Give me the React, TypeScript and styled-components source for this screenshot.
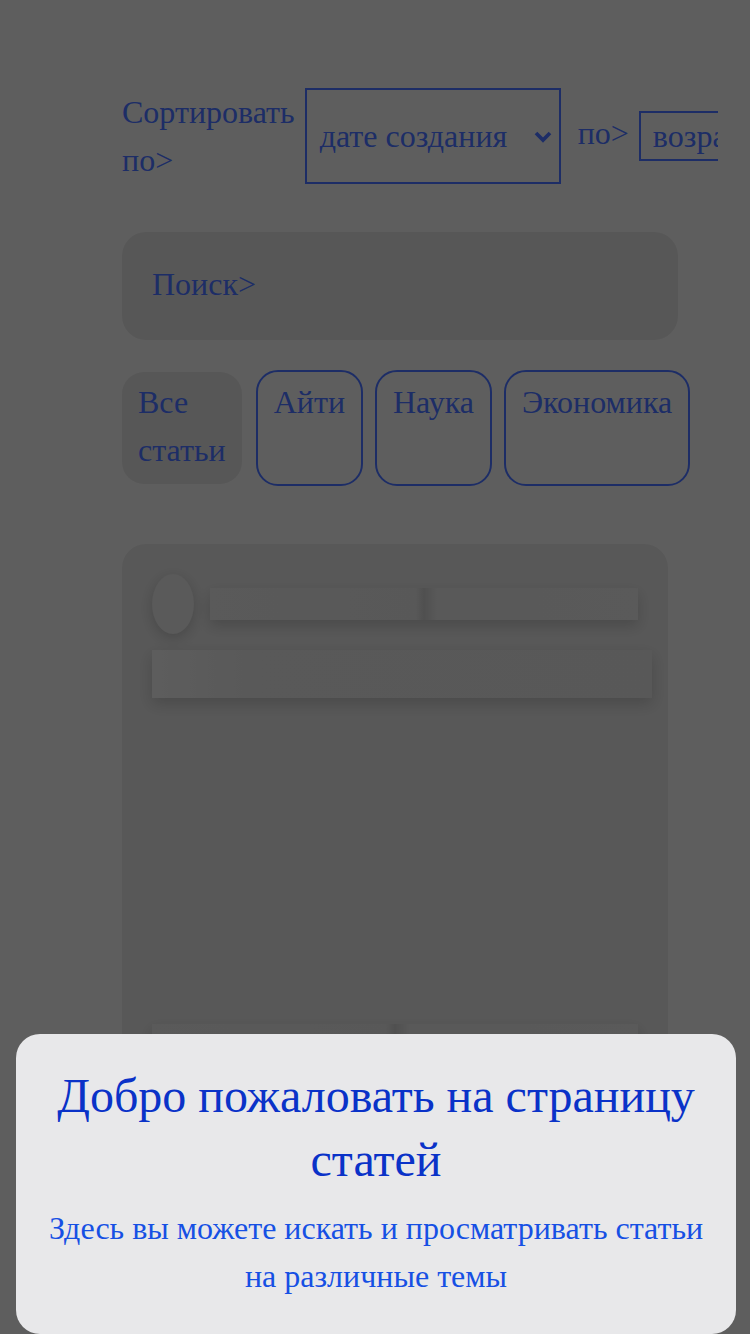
import React from "react";
import styled, { createGlobalStyle } from "styled-components";

const GlobalStyle = createGlobalStyle`
  html, body {
    margin: 0;
    padding: 0;
    background: #ececec;
    font-family: "Liberation Serif", "Times New Roman", serif;
  }
`;

const tabs = ["Все статьи", "Айти", "Наука", "Экономика"];

function Chevron() {
  return (
    <svg width="20" height="14" viewBox="0 0 20 14">
      <path d="M3 4 L10 11 L17 4" stroke="#4a72ff" strokeWidth="3.8" fill="none" />
    </svg>
  );
}

export default function App() {
  return (
    <>
      <GlobalStyle />
      <Page>
        <SortRow>
          <SortLabel>Сортировать по&gt;</SortLabel>
          <SelectBox>
            <SelectText>дате создания</SelectText>
            <ChevronWrap>
              <Chevron />
            </ChevronWrap>
          </SelectBox>
          <SortLabel $spaced>по&gt;</SortLabel>
          <SmallSelect>возрастанию</SmallSelect>
        </SortRow>

        <Search>Поиск&gt;</Search>

        <Tabs>
          {tabs.map((t, i) => (
            <Tab key={t} $active={i === 0}>
              {t}
            </Tab>
          ))}
        </Tabs>

        <Card>
          <CardHead>
            <Avatar />
            <Bar $h={32} />
          </CardHead>
          <WideBar />
          <Spacer />
          <Bar $h={40} />
        </Card>
      </Page>

      <Overlay />

      <Sheet>
        <SheetTitle>Добро пожаловать на страницу статей</SheetTitle>
        <SheetText>
          Здесь вы можете искать и просматривать статьи на различные темы
        </SheetText>
      </Sheet>
    </>
  );
}

// styled component
const Page = styled.div`
  padding: 88px 0 0 122px;
  width: 596px;
  color: #4a72ff;
  font-size: 32px;
`;

const SortRow = styled.div`
  display: flex;
  align-items: center;
  gap: 10px;
  overflow: hidden;
`;

const SortLabel = styled.div<{ $spaced?: boolean }>`
  width: min-content;
  line-height: 48px;
  flex-shrink: 0;
  margin: ${(p) => (p.$spaced ? "-6px 0 0 7px" : "0")};
`;

const SelectBox = styled.div`
  box-sizing: border-box;
  width: 256px;
  height: 96px;
  border: 2px solid #4a72ff;
  display: flex;
  align-items: center;
  padding: 0 6px 0 13px;
  flex-shrink: 0;
`;

const SelectText = styled.span`
  flex: 1;
`;

const ChevronWrap = styled.span`
  display: flex;
  align-items: center;
`;

const SmallSelect = styled.div`
  box-sizing: border-box;
  height: 50px;
  border: 2px solid #4a72ff;
  border-right: none;
  padding: 0 12px;
  display: flex;
  align-items: center;
  white-space: nowrap;
  flex-shrink: 0;
`;

const Search = styled.div`
  box-sizing: border-box;
  width: 556px;
  height: 108px;
  margin-top: 48px;
  border-radius: 24px;
  background: #dadada;
  padding: 30px 30px;
  line-height: 44px;
`;

const Tabs = styled.div`
  display: flex;
  gap: 12px;
  margin-top: 30px;
`;

const Tab = styled.div<{ $active: boolean }>`
  box-sizing: border-box;
  width: min-content;
  flex-shrink: 0;
  line-height: 48px;
  border-radius: 22px;
  ${(p) =>
    p.$active
      ? `
    height: 112px;
    margin: 2px 2px 2px 0;
    padding: 6px 16px 0;
    background: #dadada;
  `
      : `
    height: 116px;
    padding: 6px 16px 0;
    border: 2px solid #4a72ff;
  `}
`;

const Card = styled.div`
  box-sizing: border-box;
  width: 546px;
  height: 560px;
  margin-top: 58px;
  border-radius: 24px;
  background: #dcdcdc;
  padding: 30px 30px;
`;

const CardHead = styled.div`
  display: flex;
  align-items: center;
  gap: 16px;
`;

const Avatar = styled.div`
  width: 42px;
  height: 60px;
  border-radius: 50%;
  background: #e0e0e0;
  box-shadow: 0 4px 14px rgba(0, 0, 0, 0.18);
  flex-shrink: 0;
`;

const Bar = styled.div<{ $h: number }>`
  flex: 1;
  height: ${(p) => p.$h}px;
  background: linear-gradient(
    90deg,
    #e0e0e0 0%,
    #dddddd 48%,
    #c8c8c8 50%,
    #dedede 53%,
    #e0e0e0 100%
  );
  box-shadow: 0 6px 14px rgba(0, 0, 0, 0.16);
`;

const WideBar = styled.div`
  width: 500px;
  height: 48px;
  margin-top: 16px;
  background: linear-gradient(90deg, #e9e9e9 0%, #dedede 20%, #dddddd 100%);
  box-shadow: 0 6px 14px rgba(0, 0, 0, 0.16);
`;

const Spacer = styled.div`
  height: 326px;
`;

const Overlay = styled.div`
  position: fixed;
  inset: 0;
  background: rgba(0, 0, 0, 0.6);
`;

const Sheet = styled.div`
  position: fixed;
  left: 16px;
  right: 14px;
  bottom: 0;
  height: 300px;
  box-sizing: border-box;
  border-radius: 24px;
  background: #e8e8ea;
  padding: 30px 24px 0;
  text-align: center;
`;

const SheetTitle = styled.h1`
  margin: 0;
  font-weight: 400;
  font-size: 48px;
  line-height: 64px;
  color: #0a32c8;
`;

const SheetText = styled.p`
  margin: 12px 0 0;
  font-size: 32px;
  line-height: 48px;
  color: #1650e4;
`;
